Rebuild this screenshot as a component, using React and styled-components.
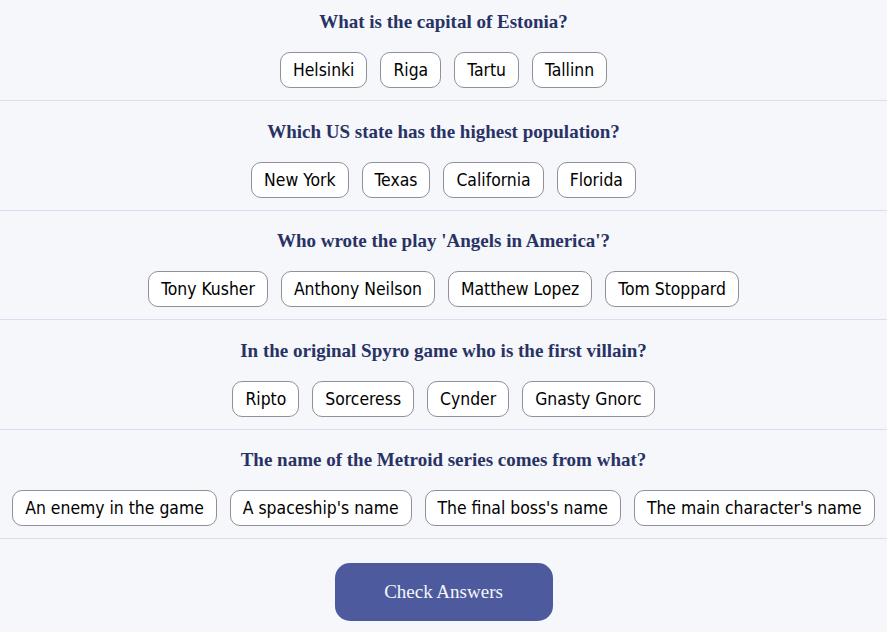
import React from 'react';
import styled, { createGlobalStyle } from 'styled-components';

const GlobalStyle = createGlobalStyle`
  body {
    margin: 0;
    background: #f5f7fb;
  }
`;

const Page = styled.main`
  width: 887px;
  min-height: 632px;
  background: #f5f7fb;
  display: flex;
  flex-direction: column;
  align-items: center;
`;

const List = styled.div`
  width: 100%;
  display: flex;
  flex-direction: column;
`;

const Question = styled.section`
  padding: ${(p) => (p.first ? '11px' : '19.5px')} 0 12px;
  border-bottom: 1px solid #dbdef0;
  display: flex;
  flex-direction: column;
  align-items: center;
  gap: 19px;
`;

const Title = styled.h2`
  margin: 0;
  font-family: 'Liberation Serif', 'Times New Roman', serif;
  font-weight: 700;
  font-size: 19px;
  line-height: 22px;
  color: #293264;
`;

const Answers = styled.div`
  display: flex;
  justify-content: center;
  gap: 13px;
`;

const Answer = styled.button`
  height: 36px;
  padding: 0 12px;
  border: 1px solid #8f8f9d;
  border-radius: 10px;
  background: #ffffff;
  color: #000000;
  font-family: 'DejaVu Sans Condensed', 'DejaVu Sans', sans-serif;
  font-size: 17.4px;
  cursor: pointer;
`;

const CheckButton = styled.button`
  margin-top: 24px;
  width: 218px;
  height: 58px;
  border: none;
  border-radius: 15px;
  background: #4d5b9e;
  color: #f5f7fb;
  font-family: 'Liberation Serif', 'Times New Roman', serif;
  font-size: 19px;
  cursor: pointer;
`;

const questions = [
  {
    q: 'What is the capital of Estonia?',
    a: ['Helsinki', 'Riga', 'Tartu', 'Tallinn'],
  },
  {
    q: 'Which US state has the highest population?',
    a: ['New York', 'Texas', 'California', 'Florida'],
  },
  {
    q: "Who wrote the play 'Angels in America'?",
    a: ['Tony Kusher', 'Anthony Neilson', 'Matthew Lopez', 'Tom Stoppard'],
  },
  {
    q: 'In the original Spyro game who is the first villain?',
    a: ['Ripto', 'Sorceress', 'Cynder', 'Gnasty Gnorc'],
  },
  {
    q: 'The name of the Metroid series comes from what?',
    a: [
      'An enemy in the game',
      "A spaceship's name",
      "The final boss's name",
      "The main character's name",
    ],
  },
];

export default function App() {
  return (
    <Page>
      <GlobalStyle />
      <List>
        {questions.map((item, i) => (
          <Question key={item.q} first={i === 0}>
            <Title>{item.q}</Title>
            <Answers>
              {item.a.map((ans) => (
                <Answer key={ans}>{ans}</Answer>
              ))}
            </Answers>
          </Question>
        ))}
      </List>
      <CheckButton>Check Answers</CheckButton>
    </Page>
  );
}
